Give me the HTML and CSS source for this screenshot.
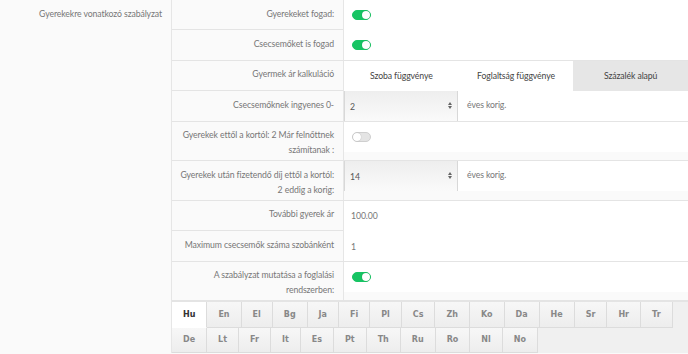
FILE: index.html
```html
<!DOCTYPE html>
<html lang="hu">
<head>
<meta charset="utf-8">
<link rel="stylesheet" href="styles.css">
</head>
<body>
<div class="page">
  <aside class="side">Gyerekekre vonatkozó szabályzat</aside>
  <main class="main">
    <div class="row">
      <div class="lbl">Gyerekeket fogad:</div>
      <div class="val"><span class="tgl on"></span></div>
    </div>
    <div class="row">
      <div class="lbl">Csecsemőket is fogad</div>
      <div class="val"><span class="tgl on"></span></div>
    </div>
    <div class="row">
      <div class="lbl">Gyermek ár kalkuláció</div>
      <div class="val btns">
        <span class="btn">Szoba függvénye</span>
        <span class="btn">Foglaltság függvénye</span>
        <span class="btn act">Százalék alapú</span>
      </div>
    </div>
    <div class="row">
      <div class="lbl">Csecsemőknek ingyenes 0-</div>
      <div class="val split">
        <div class="sel">2<span class="arr"><i class="up"></i><i class="dn"></i></span></div>
        <span class="after">éves korig.</span>
      </div>
    </div>
    <div class="row tall">
      <div class="lbl">Gyerekek ettől a kortól: 2 Már felnőttnek számítanak :</div>
      <div class="val"><span class="tgl"></span></div>
    </div>
    <div class="row tall">
      <div class="lbl">Gyerekek után fizetendő díj ettől a kortól: 2 eddig a korig:</div>
      <div class="val split">
        <div class="sel">14<span class="arr"><i class="up"></i><i class="dn"></i></span></div>
        <span class="after">éves korig.</span>
      </div>
    </div>
    <div class="row">
      <div class="lbl">További gyerek ár</div>
      <div class="val txt">100.00</div>
    </div>
    <div class="row">
      <div class="lbl">Maximum csecsemők száma szobánként</div>
      <div class="val txt">1</div>
    </div>
    <div class="row tall">
      <div class="lbl">A szabályzat mutatása a foglalási rendszerben:</div>
      <div class="val"><span class="tgl on"></span></div>
    </div>
    <div class="tabs">
      <span class="tab act">Hu</span><span class="tab">En</span><span class="tab">El</span><span class="tab">Bg</span><span class="tab">Ja</span><span class="tab">Fi</span><span class="tab">Pl</span><span class="tab">Cs</span><span class="tab">Zh</span><span class="tab">Ko</span><span class="tab">Da</span><span class="tab">He</span><span class="tab">Sr</span><span class="tab">Hr</span><span class="tab">Tr</span>
      <span class="tab">De</span><span class="tab">Lt</span><span class="tab">Fr</span><span class="tab">It</span><span class="tab">Es</span><span class="tab">Pt</span><span class="tab">Th</span><span class="tab">Ru</span><span class="tab">Ro</span><span class="tab">Nl</span><span class="tab">No</span>
    </div>
  </main>
</div>
</body>
</html>
```

FILE: styles.css
```css
* { box-sizing: border-box; }
html, body { margin: 0; padding: 0; }
body {
  background: #fafafa;
  font-family: Lato, "Open Sans", sans-serif;
  font-size: 8.7px;
  letter-spacing: -0.1px;
  line-height: 15px;
  color: #777;
  width: 688px;
  height: 354px;
  overflow: hidden;
}
.page {
  display: grid;
  grid-template-columns: 171px 517px;
}
.side {
  text-align: right;
  padding: 5.5px 9px 0 0;
  color: #777;
}
.main {
  border-left: 1px solid #e6e6e6;
}
.row {
  display: grid;
  grid-template-columns: 172px 1fr;
  border-bottom: 1px solid #e4e4e4;
  height: 30.5px;
}
.row:first-child { height: 30px; }
.row.tall { height: 39.5px; }
.lbl {
  text-align: right;
  padding: 5.5px 9px 0 8px;
  border-right: 1px solid #e6e6e6;
  color: #777;
}
.val {
  background: #fff;
  height: 30px;
  display: flex;
  align-items: center;
  padding-left: 8px;
}
.txt { padding-left: 7px; color: #777; }
.tgl {
  width: 19px;
  height: 10px;
  border-radius: 5px;
  background: #e4e4e4;
  border: 1px solid #cfcfcf;
  position: relative;
  display: inline-block;
}
.tgl::after {
  content: "";
  position: absolute;
  top: 0px;
  left: 0px;
  width: 8px;
  height: 8px;
  border-radius: 50%;
  background: #fff;
  box-shadow: 0 0 1px rgba(0,0,0,0.3);
}
.tgl.on { background: #17c463; border-color: #17c463; }
.tgl.on::after { left: 9px; }
.btns { padding: 0; }
.btn {
  flex: 1;
  height: 100%;
  display: flex;
  align-items: center;
  justify-content: center;
  color: #444;
}
.btn.act { background: #e6e6e6; }
.split { padding: 0; align-items: stretch; }
.sel {
  width: 114px;
  background: linear-gradient(#eeeeee, #fafafa);
  border-left: 1px solid #d8d8d8;
  border-right: 1px solid #d8d8d8;
  display: flex;
  align-items: center;
  padding-left: 5px;
  color: #555;
  position: relative;
}
.arr {
  position: absolute;
  right: 5px;
  top: 11px;
  display: flex;
  flex-direction: column;
  gap: 1px;
}
.arr i {
  width: 0; height: 0;
  border-left: 2px solid transparent;
  border-right: 2px solid transparent;
}
.arr .up { border-bottom: 3px solid #666; }
.arr .dn { border-top: 3px solid #666; }
.after { padding: 5.5px 0 0 9px; color: #777; }
.tabs {
  display: flex;
  flex-wrap: wrap;
  background: #f0f0f0;
  border-top: 1px solid #e4e4e4;
  padding-right: 6px;
  height: 52px;
  letter-spacing: 0;
}
.tab {
  height: 25.5px;
  padding: 0 11px;
  display: flex;
  align-items: center;
  justify-content: center;
  font-family: "DejaVu Sans", Verdana, sans-serif;
  font-weight: bold;
  font-size: 8px;
  color: #888;
  background: linear-gradient(#f7f7f7, #ededed);
  border-right: 1px solid #dcdcdc;
  border-bottom: 1px solid #dcdcdc;
}
.tab.act { background: #fff; color: #333; border-bottom-color: #fff; }
```
